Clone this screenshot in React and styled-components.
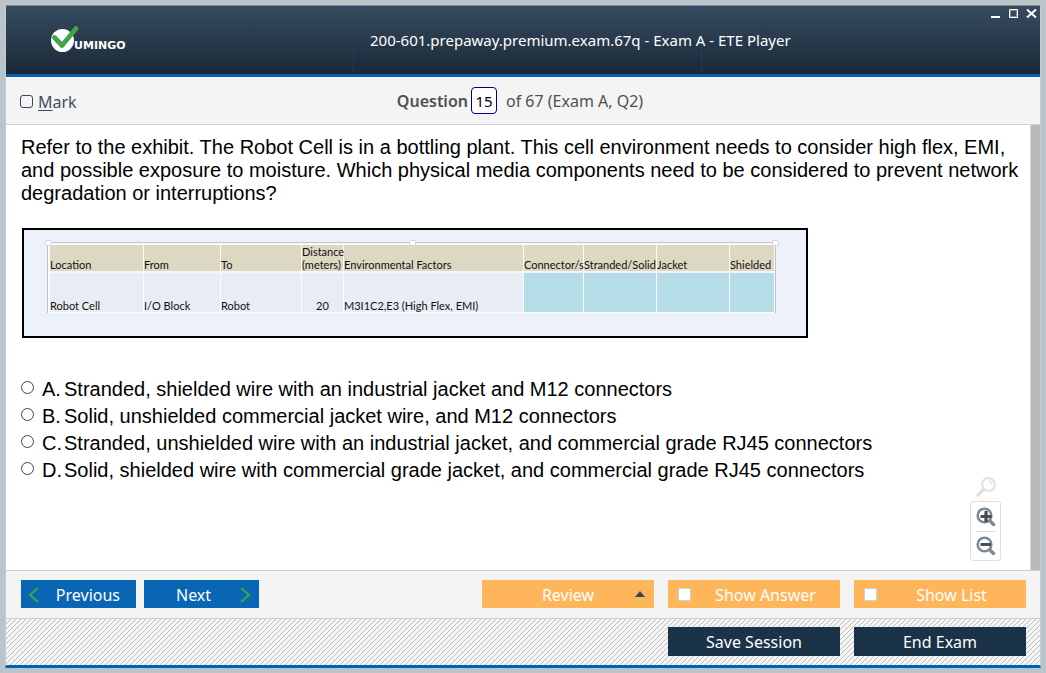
import React, { useState } from "react";
import styled, { createGlobalStyle } from "styled-components";

const UI = `"Noto Sans", "Open Sans", sans-serif`;
const BODY = `"Liberation Sans", Arial, sans-serif`;

const GlobalStyle = createGlobalStyle`
  *, *::before, *::after { box-sizing: border-box; }
  body { margin: 0; background: #b9c5cb; font-family: ${UI}; }
  button, input { font: inherit; margin: 0; }
`;

const Page = styled.div`
  min-height: 100vh;
  padding: 5px;
  display: flex;
`;

const Window = styled.div`
  flex: 1;
  min-width: 0;
  display: flex;
  flex-direction: column;
  border: 1px solid #c6cbce;
  border-top-color: #7e8e97;
  border-bottom: 3px solid #0461b0;
  background: #fff;
`;

const Header = styled.header`
  position: relative;
  flex: none;
  display: grid;
  grid-template-columns: minmax(0, 347fr) minmax(0, 349fr) minmax(0, 338fr);
  height: 71px;
  background: linear-gradient(#364c60, #1a2836);
  border-bottom: 3px solid #0461b0;
`;

const Brand = styled.div`
  padding: 18px 0 0 44px;
  svg { display: block; }
`;

const TitleCell = styled.div`
  display: flex;
  align-items: center;
  padding-left: 16px;
  border: 1px dotted #2c3a8c;
  border-width: 0 1px;
`;

const Title = styled.h1`
  margin: 0;
  font-size: 15px;
  font-weight: 400;
  line-height: 20px;
  color: #fff;
  white-space: nowrap;
`;

const WindowControls = styled.div`
  position: absolute;
  top: 2px;
  right: 2px;
  display: flex;
  gap: 6px;
`;

const ControlButton = styled.button`
  width: 12px;
  height: 12px;
  padding: 0;
  border: 0;
  background: none;
  svg { display: block; }
`;

const StatusBar = styled.div`
  flex: none;
  display: grid;
  grid-template-columns: 1fr auto 1fr;
  align-items: center;
  height: 48px;
  padding: 0 20px 0 14px;
  background: #f4f4f4;
  border-bottom: 1px solid #d0d0d0;
  font-size: 16px;
  color: #505050;
`;

const MarkLabel = styled.label`
  display: flex;
  align-items: center;
  gap: 5px;
  padding-top: 2px;
  color: #3d4f5f;
  u { text-underline-offset: 2px; }
`;

const MarkBox = styled.input`
  appearance: none;
  width: 13px;
  height: 13px;
  border: 1px solid #34495e;
  border-radius: 3px;
  &:checked { background: #34495e; }
`;

const Position = styled.div`
  display: flex;
  align-items: center;
  label { font-weight: 600; }
`;

const NumberInput = styled.input`
  width: 26px;
  height: 27px;
  margin: 0 9px 0 3px;
  padding: 0;
  border: 1px solid #00007c;
  border-radius: 4px;
  background: #fff;
  color: #000;
  font-size: 15px;
  text-align: center;
`;

const Content = styled.main`
  position: relative;
  flex: 1;
  display: flex;
  font-family: ${BODY};
  color: #000;
`;

const Question = styled.div`
  flex: 1;
  min-width: 0;
  padding: 11px 4px 20px 15px;
`;

const Prompt = styled.p`
  margin: 0;
  font-size: 20px;
  line-height: 23px;
`;

const ScrollTrack = styled.div`
  flex: none;
  width: 10px;
  background: #bbb9b5;
  border-left: 1px solid #d4d4d4;
`;

const Exhibit = styled.figure`
  width: 786px;
  max-width: 100%;
  margin: 23px 0 0 1px;
  padding: 12px 30px 23px 23px;
  border: 2px solid #000;
  background: #edf1f9;
`;

const Selection = styled.div`
  position: relative;
  padding: 2px 1px 0 2px;
  border: 1px solid #bfc1c4;
  border-bottom: 0;
  background: #fafbfc;
`;

const Handle = styled.span`
  position: absolute;
  top: -3px;
  left: ${(p) => p.$at};
  width: 7px;
  height: 6px;
  margin-left: -3px;
  border: 1px solid #d5d7da;
  border-radius: 2px;
  background: #fff;
`;

const MediaTable = styled.table`
  width: 100%;
  table-layout: fixed;
  border-collapse: separate;
  border-spacing: 0;
  font-family: Lato, ${UI};
  font-size: 11px;
  line-height: 13px;
  color: #111;
  th, td {
    padding: 0;
    border-right: 1px solid #fafbfc;
    text-align: left;
    vertical-align: bottom;
    font-weight: 400;
    white-space: nowrap;
  }
  th:last-child, td:last-child { border-right: 0; }
  th { height: 28px; background: #ddd8c2; border-bottom: 2px solid #f3f5f7; }
  td { height: 40px; background: #e8ecf4; border-bottom: 1px solid #f8f9fb; }
`;

const BlankCell = styled.td`
  && { background: #b6dce7; }
`;

const CenterCell = styled.td`
  && { text-align: center; }
`;

const Options = styled.fieldset`
  margin: 38px 0 0;
  padding: 0;
  border: 0;
`;

const Option = styled.label`
  display: grid;
  grid-template-columns: 21px 22px 1fr;
  height: 27px;
  font-size: 20px;
  line-height: 27px;
  white-space: nowrap;
`;

const Radio = styled.input`
  appearance: none;
  width: 13px;
  height: 13px;
  && { margin-top: 5px; }
  border: 1px solid #444;
  border-radius: 50%;
  background: #fff;
  &:checked { background: radial-gradient(#222 40%, #fff 45%); }
`;

const ZoomTools = styled.div`
  position: absolute;
  right: 39px;
  bottom: 9px;
  display: flex;
  flex-direction: column;
  align-items: center;
  gap: 4px;
`;

const ZoomPanel = styled.div`
  display: flex;
  flex-direction: column;
  align-items: center;
  width: 31px;
  border: 1px solid #dedede;
  border-radius: 3px;
  background: #fff;
`;

const ZoomButton = styled.button`
  display: flex;
  align-items: center;
  justify-content: center;
  width: 19px;
  height: 29px;
  padding: 0;
  border: 0;
  background: none;
  svg { flex: none; }
  & + & { border-top: 1px solid #dcdcdc; }
`;

const ResetButton = styled(ZoomButton)`
  width: 20px;
  height: 20px;
`;

const Toolbar = styled.div`
  flex: none;
  display: flex;
  justify-content: space-between;
  height: 48px;
  padding: 9px 14px 0 15px;
  border-top: 1px solid #d0d0d0;
  background: #f4f4f4;
`;

const SessionBar = styled.footer`
  flex: none;
  display: flex;
  justify-content: flex-end;
  height: 47px;
  padding: 8px 14px 0 15px;
  border-top: 1px solid #cfcfcf;
  background: linear-gradient(135deg, #f5f5f5 45%, #bdbdbd 45% 55%, #f5f5f5 55%) 0 0 / 5px 5px;
`;

const Group = styled.div`
  display: flex;
  gap: ${(p) => p.$gap}px;
`;

const actionBase = `
  position: relative;
  display: flex;
  align-items: center;
  justify-content: center;
  border: 0;
  color: #fff;
  font-size: 16px;
  line-height: 20px;
  white-space: nowrap;
`;

const NavButton = styled.button`
  ${actionBase}
  justify-content: space-between;
  width: 115px;
  height: 28px;
  padding: 1px ${(p) => (p.$forward ? 9 : 16)}px 0 ${(p) => (p.$forward ? 32 : 8)}px;
  background: #0866b5;
`;

const ReviewButton = styled.button`
  ${actionBase}
  width: 172px;
  height: 28px;
  padding: 1px 0 0;
  background: #ffb65a;
  svg { position: absolute; right: 9px; top: 11px; }
`;

const ToggleLabel = styled.label`
  ${actionBase}
  width: 172px;
  height: 28px;
  padding: 1px 0 0 10px;
  justify-content: flex-start;
  background: #ffb65a;
  span { flex: 1; text-align: center; }
`;

const ToggleBox = styled.input`
  appearance: none;
  width: 13px;
  height: 13px;
  border: 1px solid #ccd3d8;
  background: #fff;
  &:checked { background: #1b344a; }
`;

const SessionButton = styled.button`
  ${actionBase}
  width: 172px;
  height: 29px;
  padding: 0;
  background: #1a3349;
`;

function Logo() {
  return (
    <svg width="84" height="30" viewBox="0 0 84 30" role="img" aria-label="Vumingo">
      <circle cx="12.5" cy="16.5" r="11.5" fill="#fff" />
      <path d="M4.5 13.5 L12 21.5 L26 4.5" fill="none" stroke="#41a447" strokeWidth="4.8" strokeLinecap="round" strokeLinejoin="round" />
      <text x="24" y="25" fill="#fff" fontFamily="DejaVu Sans, sans-serif" fontWeight="700" fontSize="11">UMINGO</text>
    </svg>
  );
}

function Lens({ sign, faint }) {
  const ring = faint ? "#e0e0e0" : "#7c8a95";
  return (
    <svg width="20" height="20" viewBox="0 0 20 20" aria-hidden="true">
      {faint ? (
        <>
          <path d="M8 12 L2 18" stroke={ring} strokeWidth="3.4" strokeLinecap="round" />
          <circle cx="12.5" cy="7.5" r="6.4" fill="#fff" stroke={ring} strokeWidth="2" />
          <path d="M12.5 4 A3.5 3.5 0 0 1 16 7.5" fill="none" stroke={ring} strokeWidth="1.5" />
        </>
      ) : (
        <>
          <path d="M13 13 L17.5 17.5" stroke={ring} strokeWidth="3.4" strokeLinecap="round" />
          <circle cx="8.5" cy="8.5" r="6.8" fill="#fff" stroke={ring} strokeWidth="2.6" />
          {sign === "+"
            ? <path d="M4.5 9.5 H15.5 M10 4 V15" stroke="#4c4c4c" strokeWidth="3.2" />
            : <path d="M4.5 8.5 H15" stroke="#4c4c4c" strokeWidth="3" />}
        </>
      )}
    </svg>
  );
}

function Chevron({ forward }) {
  return (
    <svg width="10" height="16" viewBox="0 0 10 16" aria-hidden="true">
      <path d={forward ? "M1 1 L9 8 L1 15" : "M9 1 L1 8 L9 15"} fill="none" stroke="#43a548" strokeWidth="2" />
    </svg>
  );
}

const columns = [
  ["Location", 94],
  ["From", 77],
  ["To", 81],
  [<>Distance<br />(meters)</>, 42],
  ["Environmental Factors", 180],
  ["Connector/s", 60],
  ["Stranded/Solid", 73],
  ["Jacket", 73],
  ["Shielded", 44],
];

const options = [
  ["A.", "Stranded, shielded wire with an industrial jacket and M12 connectors"],
  ["B.", "Solid, unshielded commercial jacket wire, and M12 connectors"],
  ["C.", "Stranded, unshielded wire with an industrial jacket, and commercial grade RJ45 connectors"],
  ["D.", "Solid, shielded wire with commercial grade jacket, and commercial grade RJ45 connectors"],
];

export default function App() {
  const [number, setNumber] = useState("15");
  return (
    <Page>
      <GlobalStyle />
      <Window>
        <Header>
          <Brand><Logo /></Brand>
          <TitleCell><Title>200-601.prepaway.premium.exam.67q - Exam A - ETE Player</Title></TitleCell>
          <WindowControls>
            <ControlButton aria-label="Minimize">
              <svg width="12" height="12"><path d="M1 9 H10" stroke="#fff" strokeWidth="2" /></svg>
            </ControlButton>
            <ControlButton aria-label="Maximize">
              <svg width="12" height="12"><path d="M1.5 1.5 H9.5 V9.5 H1.5 Z" fill="none" stroke="#fff" /><path d="M2.5 2.5 H8.5 V8.5 H2.5 Z" fill="none" stroke="#8d8780" /></svg>
            </ControlButton>
            <ControlButton aria-label="Close">
              <svg width="12" height="12"><path d="M1 1.5 L10 9.5 M10 1.5 L1 9.5" stroke="#fff" strokeWidth="2" /></svg>
            </ControlButton>
          </WindowControls>
        </Header>

        <StatusBar>
          <MarkLabel><MarkBox type="checkbox" /><span><u>M</u>ark</span></MarkLabel>
          <Position>
            <label htmlFor="question-number">Question</label>
            <NumberInput id="question-number" value={number} onChange={(e) => setNumber(e.target.value)} />
            <span>of 67 (Exam A, Q2)</span>
          </Position>
        </StatusBar>

        <Content>
          <Question>
            <Prompt>
              Refer to the exhibit. The Robot Cell is in a bottling plant. This cell environment needs to consider high flex, EMI,
              and possible exposure to moisture. Which physical media components need to be considered to prevent network
              degradation or interruptions?
            </Prompt>
            <Exhibit>
              <Selection>
                <MediaTable>
                  <colgroup>
                    {columns.map(([, width], i) => <col key={i} width={width} />)}
                  </colgroup>
                  <thead>
                    <tr>{columns.map(([name], i) => <th key={i} scope="col">{name}</th>)}</tr>
                  </thead>
                  <tbody>
                    <tr>
                      <td>Robot Cell</td>
                      <td>I/O Block</td>
                      <td>Robot</td>
                      <CenterCell>20</CenterCell>
                      <td>M3I1C2,E3 (High Flex, EMI)</td>
                      <BlankCell /><BlankCell /><BlankCell /><BlankCell />
                    </tr>
                  </tbody>
                </MediaTable>
                <Handle $at="0%" /><Handle $at="50%" /><Handle $at="100%" />
              </Selection>
            </Exhibit>
            <Options aria-label="Answers">
              {options.map(([letter, text]) => (
                <Option key={letter}>
                  <Radio type="radio" name="answer" />
                  <span>{letter}</span>
                  <span>{text}</span>
                </Option>
              ))}
            </Options>
          </Question>
          <ScrollTrack />
          <ZoomTools>
            <ResetButton aria-label="Reset zoom"><Lens faint /></ResetButton>
            <ZoomPanel>
              <ZoomButton aria-label="Zoom in"><Lens sign="+" /></ZoomButton>
              <ZoomButton aria-label="Zoom out"><Lens sign="-" /></ZoomButton>
            </ZoomPanel>
          </ZoomTools>
        </Content>

        <Toolbar>
          <Group $gap={8}>
            <NavButton><Chevron />Previous</NavButton>
            <NavButton $forward>Next<Chevron forward /></NavButton>
          </Group>
          <Group $gap={14}>
            <ReviewButton>
              Review
              <svg width="10" height="6" aria-hidden="true"><path d="M0 6 L5 0 L10 6 Z" fill="#34495e" /></svg>
            </ReviewButton>
            <ToggleLabel><ToggleBox type="checkbox" /><span>Show Answer</span></ToggleLabel>
            <ToggleLabel><ToggleBox type="checkbox" /><span>Show List</span></ToggleLabel>
          </Group>
        </Toolbar>
        <SessionBar>
          <Group $gap={14}>
            <SessionButton>Save Session</SessionButton>
            <SessionButton>End Exam</SessionButton>
          </Group>
        </SessionBar>
      </Window>
    </Page>
  );
}
